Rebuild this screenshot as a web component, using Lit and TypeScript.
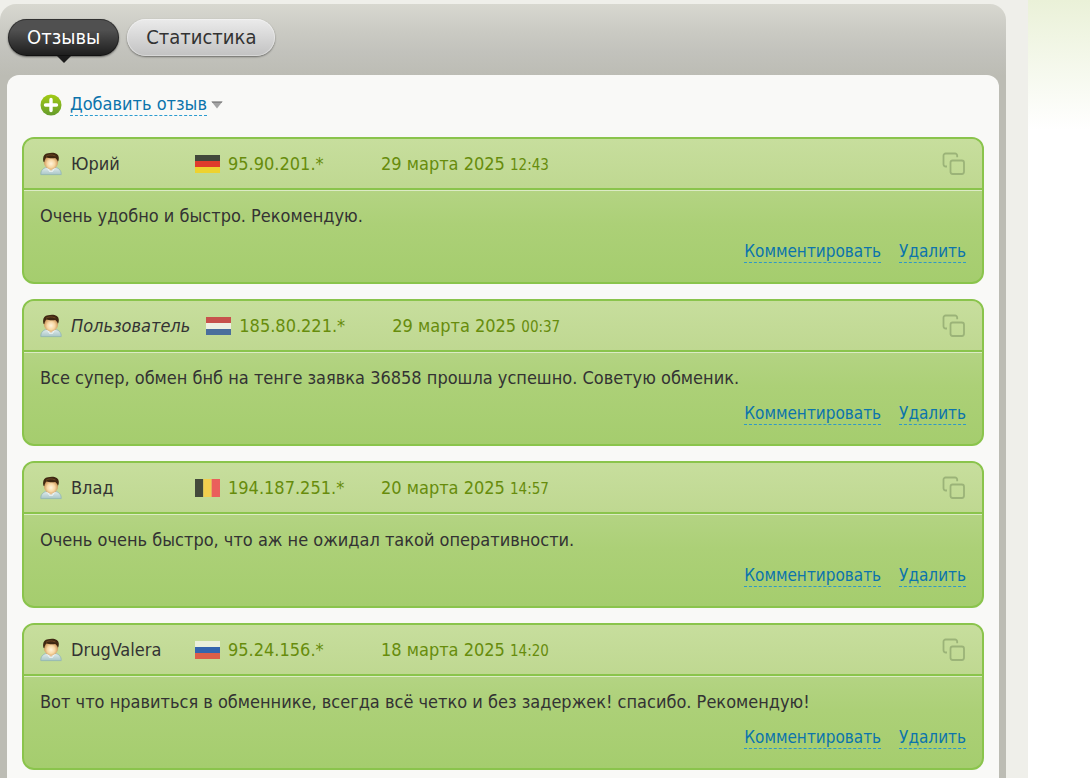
import { LitElement, html, css, svg } from "lit";
import { customElement, property, state } from "lit/decorators.js";

type Country = "de" | "nl" | "be" | "ru";

interface Review {
  name: string;
  anonymous?: boolean;
  country: Country;
  ip: string;
  date: string;
  time: string;
  text: string;
}

const COUNTRIES: Record<Country, { title: string; vertical?: boolean; colors: string[] }> = {
  de: { title: "Германия", colors: ["#42483b", "#df3c2c", "#eed22f"] },
  nl: { title: "Нидерланды", colors: ["#c7524c", "#eef1e2", "#4a6f9c"] },
  be: { title: "Бельгия", vertical: true, colors: ["#434a3b", "#f2cf4e", "#ea5f5c"] },
  ru: { title: "Россия", colors: ["#eaf0dc", "#3465ae", "#dc5f49"] },
};

const REVIEWS: Review[] = [
  { name: "Юрий", country: "de", ip: "95.90.201.*", date: "29 марта 2025", time: "12:43", text: "Очень удобно и быстро. Рекомендую." },
  { name: "Пользователь", anonymous: true, country: "nl", ip: "185.80.221.*", date: "29 марта 2025", time: "00:37", text: "Все супер, обмен бнб на тенге заявка 36858 прошла успешно. Советую обменик." },
  { name: "Влад", country: "be", ip: "194.187.251.*", date: "20 марта 2025", time: "14:57", text: "Очень очень быстро, что аж не ожидал такой оперативности." },
  { name: "DrugValera", country: "ru", ip: "95.24.156.*", date: "18 марта 2025", time: "14:20", text: "Вот что нравиться в обменнике, всегда всё четко и без задержек! спасибо. Рекомендую!" },
];

@customElement("country-flag")
export class CountryFlag extends LitElement {
  @property() country: Country = "de";

  static styles = css`
    :host { display: block; flex: none; width: 25px; height: 18px; }
    .flag { display: block; width: 100%; height: 100%; }
  `;

  render() {
    const { title, vertical, colors } = COUNTRIES[this.country];
    return html`
      <svg class="flag" viewBox="0 0 24 18" preserveAspectRatio="none" role="img" aria-label=${title}>
        ${colors.map((color, i) =>
          vertical
            ? svg`<rect x=${i * 8} y="0" width="8" height="18" fill=${color}></rect>`
            : svg`<rect x="0" y=${i * 6} width="24" height="6" fill=${color}></rect>`
        )}
      </svg>
    `;
  }
}

@customElement("review-card")
export class ReviewCard extends LitElement {
  @property({ attribute: false }) review!: Review;

  static styles = css`
    :host { display: block; }
    .card {
      border: 2px solid #8ac44c;
      border-radius: 12px;
      overflow: hidden;
      background: linear-gradient(#bfd994, #acd077 60%, #a5cd6e);
      color: #333;
      font-size: 18px;
      line-height: 22px;
    }
    .head {
      display: flex;
      align-items: center;
      height: 49px;
      padding: 0 16px;
      background: linear-gradient(#c7de9d, #bfd891);
      border-bottom: 2px solid #8ac44c;
      white-space: nowrap;
    }
    .avatar { flex: none; width: 22px; height: 24px; margin-right: 9px; }
    .name { min-width: 108px; margin-right: 16px; }
    .anonymous { font-style: italic; }
    .ip { min-width: 144px; margin: 0 9px 0 8px; color: #678c0c; }
    .date { color: #678c0c; }
    .time { font-size: 15px; line-height: 15px; }
    .copy {
      display: block;
      margin-left: auto;
      padding: 0;
      border: 0;
      background: none;
      color: #9bb378;
      cursor: pointer;
    }
    .copy svg { display: block; width: 24px; height: 24px; }
    .body {
      border-top: 1px solid #dcebc5;
      padding: 14px 16px 19px;
    }
    .text { margin: 0; }
    .actions {
      display: flex;
      justify-content: flex-end;
      gap: 18px;
      margin-top: 14px;
      font-size: 17px;
      line-height: 21px;
    }
    .action {
      color: #0c74ac;
      text-decoration: none;
      border-bottom: 1px dashed #2f98c8;
    }
  `;

  render() {
    const r = this.review;
    return html`
      <article class="card">
        <header class="head">
          <svg class="avatar" viewBox="0 0 22 24" aria-hidden="true">
            <defs>
              <radialGradient id="face" cx=".5" cy=".6" r=".6">
                <stop offset="0" stop-color="#fff4dc"></stop>
                <stop offset=".45" stop-color="#f8d8a4"></stop>
                <stop offset="1" stop-color="#bd7e40"></stop>
              </radialGradient>
              <linearGradient id="shirt" x1="0" y1="0" x2="0" y2="1">
                <stop offset="0" stop-color="#e2ecec"></stop>
                <stop offset="1" stop-color="#a9c6c8"></stop>
              </linearGradient>
            </defs>
            <path d="M.8 22.6C.6 18.5 3 16 7 15.3H15C19 16 21.4 18.500 21.200 22.600Z" fill="url(#shirt)" stroke="#94b8b4" stroke-width=".9"></path>
            <path d="M8 15.500L11 19L14 15.500Z" fill="#f0c999"></path>
            <path d="M7.500 16.500L10 19.800L11 18.800L12 19.800L14.500 16.500" fill="none" stroke="#f4f8f8" stroke-width="1"></path>
            <ellipse cx="11" cy="10.200" rx="7" ry="7.200" fill="url(#face)"></ellipse>
            <path d="M3.400 9.800C2.300 4.800 4 1.400 8 1.200C13 -.2 19.200 .9 18.800 6.300C18.800 7.800 18.500 8.800 17.900 9.800C17.300 7.800 16.300 6.800 15.300 6C12 6.500 8.500 6.200 6.500 5.500C5.300 6.500 4.800 8 4.400 10Z" fill="#3f2812"></path>
            <path d="M6 4.300C8 2.600 12 2.300 15.500 4" fill="none" stroke="#6e4722" stroke-width="1"></path>
          </svg>
          <span class="name ${r.anonymous ? "anonymous" : ""}">${r.name}</span>
          <country-flag .country=${r.country}></country-flag>
          <span class="ip">${r.ip}</span>
          <time class="date">${r.date} <span class="time">${r.time}</span></time>
          <button class="copy" type="button" aria-label="Копировать">
            <svg viewBox="0 0 24 24" fill="none" stroke="currentColor" stroke-width="1.800" aria-hidden="true">
              <path d="M5 14.500H4A2.200 2.200 0 0 1 1.500 12.300V3.700A2.200 2.200 0 0 1 3.700 1.500H13A2.200 2.200 0 0 1 15.200 3.700V5.200"></path>
              <rect x="8.500" y="8.500" width="13.500" height="13.500" rx="2.200"></rect>
            </svg>
          </button>
        </header>
        <div class="body">
          <p class="text">${r.text}</p>
          <nav class="actions">
            <a class="action" href="#comment">Комментировать</a>
            <a class="action" href="#delete">Удалить</a>
          </nav>
        </div>
      </article>
    `;
  }
}

@customElement("app-root")
export class AppRoot extends LitElement {
  @state() private tab = "reviews";

  static styles = css`
    :host {
      display: flex;
      min-height: 100vh;
      background: linear-gradient(#eaf1d8, #fff 130px);
      font-family: Tahoma, "DejaVu Sans Condensed", "Noto Sans", sans-serif;
    }
    .page {
      flex: 1;
      min-width: 0;
      margin-right: 62px;
      padding: 4px 22px 0 0;
      background: #efefea;
    }
    .panel {
      padding: 0 7px;
      border-radius: 16px 16px 0 0;
      background: linear-gradient(#d8d8d0, #cacac3 28px, #c2c2bc 48px, #bcbcb4 72px);
    }
    .tabs { display: flex; gap: 8px; height: 71px; padding: 15px 1px 0; box-sizing: border-box; }
    .tab {
      position: relative;
      height: 37px;
      padding: 0 19px 2px;
      border: 0;
      border-radius: 19px;
      background: linear-gradient(#ebebeb, #c2c2c2);
      box-shadow: 0 1px 2px rgba(0, 0, 0, .45), inset 0 0 0 1px rgba(255, 255, 255, .35);
      color: #333;
      font: inherit;
      font-size: 20px;
      line-height: 34px;
      cursor: pointer;
    }
    .tab[aria-selected="true"] {
      background: linear-gradient(#505050 30%, #1c1c1c);
      box-shadow: 0 1px 2px rgba(0, 0, 0, .5), inset 0 0 0 1px rgba(0, 0, 0, .4);
      color: #fff;
    }
    .tab[aria-selected="true"]::after {
      content: "";
      position: absolute;
      top: 100%;
      left: 50%;
      margin-left: -7px;
      border: 7px solid transparent;
      border-top-color: #1c1c1c;
      border-bottom: 0;
    }
    .content {
      padding: 18px 15px 15px;
      border-radius: 12px 12px 0 0;
      background: #f9f9f7;
    }
    .add {
      display: flex;
      align-items: center;
      margin: 0 0 21px 18px;
      padding: 0;
      border: 0;
      background: none;
      color: #0c74ac;
      font: inherit;
      font-size: 18px;
      line-height: 22px;
      cursor: pointer;
    }
    .plus { width: 22px; height: 22px; margin-right: 8px; }
    .label { border-bottom: 1px dashed #2a9bd0; }
    .arrow { width: 12px; height: 8px; margin-left: 4px; }
    .list { display: flex; flex-direction: column; gap: 15px; }
  `;

  private renderTab(id: string, label: string) {
    return html`<button
      class="tab"
      type="button"
      role="tab"
      aria-selected=${this.tab === id ? "true" : "false"}
      @click=${() => (this.tab = id)}
    >${label}</button>`;
  }

  render() {
    return html`
      <main class="page">
        <section class="panel">
          <div class="tabs" role="tablist">
            ${this.renderTab("reviews", "Отзывы")}
            ${this.renderTab("stats", "Статистика")}
          </div>
          <div class="content">
            <button class="add" type="button">
              <svg class="plus" viewBox="0 0 22 22" aria-hidden="true">
                <defs>
                  <linearGradient id="plus-fill" x1="0" y1="0" x2="0" y2="1">
                    <stop offset="0" stop-color="#a2cb15"></stop>
                    <stop offset="1" stop-color="#659c2b"></stop>
                  </linearGradient>
                </defs>
                <circle cx="11" cy="11" r="10.500" fill="url(#plus-fill)"></circle>
                <path d="M11 5.500V16.500M5.500 11H16.500" stroke="#fff" stroke-width="3.400" stroke-linecap="round"></path>
              </svg>
              <span class="label">Добавить отзыв</span>
              <svg class="arrow" viewBox="0 0 12 8" aria-hidden="true">
                <path d="M.5.500H11.500L6 7.500Z" fill="#a3a3a3"></path>
                <path d="M.5.500H11.500L10.500 2H1.500Z" fill="#858585"></path>
              </svg>
            </button>
            <div class="list">
              ${REVIEWS.map((review) => html`<review-card .review=${review}></review-card>`)}
            </div>
          </div>
        </section>
      </main>
    `;
  }
}
